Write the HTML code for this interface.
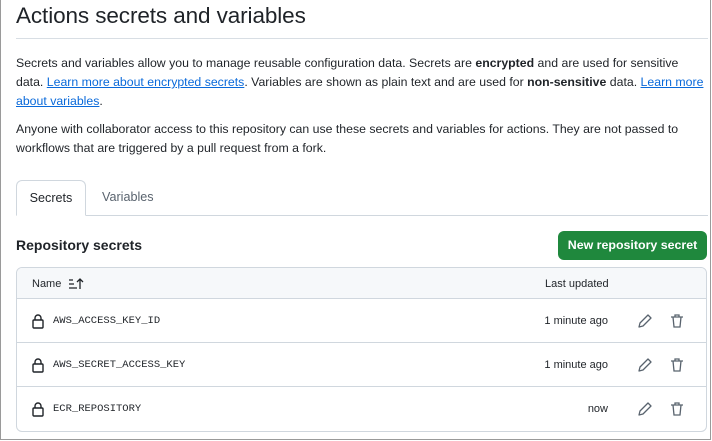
<!DOCTYPE html>
<html><head><meta charset="utf-8"><style>
*{box-sizing:border-box;margin:0;padding:0}
body{width:712px;height:441px;overflow:hidden;background:#fff;font-family:"Liberation Sans",sans-serif;color:#1f2328;position:relative}
.frame{position:absolute;left:0;top:-2px;width:711px;height:442px;border:1px solid #9a9a9a;border-top:none}
h1{position:absolute;left:16px;top:3px;font-size:22.5px;font-weight:400;letter-spacing:-0.1px;white-space:nowrap}
.hr{position:absolute;left:16px;right:4px;top:38px;border-top:1px solid #d8dee4}
.p{position:absolute;left:16px;font-size:12.3px;line-height:19px;white-space:nowrap}
a{color:#0969da;text-decoration:underline}
.tabline{position:absolute;left:16px;right:4px;top:215px;border-top:1px solid #d0d7de}
.tab{position:absolute;left:16px;top:180px;width:70px;height:36px;border:1px solid #d0d7de;border-bottom:1px solid #fff;border-radius:6px 6px 0 0;background:#fff;font-size:12.6px;text-align:center;line-height:34px}
.tab2{position:absolute;left:102px;top:190px;font-size:12.6px;color:#59636e}
h2{position:absolute;left:16px;top:237px;font-size:14px;font-weight:600}
.btn{position:absolute;left:558px;top:231px;width:149px;height:29px;background:#1f883d;border-radius:6px;color:#fff;font-weight:700;font-size:12.4px;text-align:center;line-height:29px}
.tbl{position:absolute;left:16px;top:267px;width:691px;height:165px;border:1px solid #d0d7de;border-radius:6px;overflow:hidden}
.hd{height:31px;background:#f6f8fa;border-bottom:1px solid #d0d7de;position:relative;font-size:11px}
.row{height:44px;border-bottom:1px solid #d0d7de;position:relative;font-size:11px}
.row:last-child{border-bottom:none}
.mono{font-family:"Liberation Mono",monospace;font-size:10.5px;position:absolute;left:36px;top:16px}
.t{position:absolute;right:98px;top:16px;color:#1f2328}
svg{position:absolute}
</style></head><body>
<div class="frame"></div>
<h1>Actions secrets and variables</h1>
<div class="hr"></div>
<div class="p" style="top:54px">Secrets and variables allow you to manage reusable configuration data. Secrets are <b>encrypted</b> and are used for sensitive<br>data. <a>Learn more about encrypted secrets</a>. Variables are shown as plain text and are used for <b>non-sensitive</b> data. <a>Learn more</a><br><a>about variables</a>.</div>
<div class="p" style="top:120px">Anyone with collaborator access to this repository can use these secrets and variables for actions. They are not passed to<br>workflows that are triggered by a pull request from a fork.</div>
<div class="tabline"></div>
<div class="tab">Secrets</div>
<div class="tab2">Variables</div>
<h2>Repository secrets</h2>
<div class="btn">New repository secret</div>
<div class="tbl">
<div class="hd"><span style="position:absolute;left:15px;top:10px">Name</span>
<svg style="left:51px;top:10px" width="16" height="12" viewBox="0 0 16 12"><path d="M1 2h4M1 6h5M1 10h8M12 11V1M9 4l3-3 3 3" stroke="#1f2328" stroke-width="1.3" fill="none"/></svg>
<span style="position:absolute;left:528px;top:10px">Last updated</span></div>
<div class="row"><svg style="left:14px;top:14px" width="14" height="16" viewBox="0 0 14 16"><rect x="2" y="7" width="10" height="8" rx="1" stroke="#1f2328" stroke-width="1.4" fill="none"/><path d="M4 7V5a3 3 0 016 0v2" stroke="#1f2328" stroke-width="1.4" fill="none"/></svg><span class="mono">AWS_ACCESS_KEY_ID</span><span class="t">1 minute ago</span>
<svg style="left:620px;top:14px" width="16" height="16" viewBox="0 0 16 16"><path d="M11 2l3 3-8 8-4 1 1-4z" stroke="#59636e" stroke-width="1.3" fill="none" stroke-linejoin="round"/></svg>
<svg style="left:652px;top:14px" width="16" height="16" viewBox="0 0 16 16"><path d="M2 4h12M6 4V2h4v2M4 4l1 10h6l1-10" stroke="#59636e" stroke-width="1.3" fill="none"/></svg></div>
<div class="row"><svg style="left:14px;top:14px" width="14" height="16" viewBox="0 0 14 16"><rect x="2" y="7" width="10" height="8" rx="1" stroke="#1f2328" stroke-width="1.4" fill="none"/><path d="M4 7V5a3 3 0 016 0v2" stroke="#1f2328" stroke-width="1.4" fill="none"/></svg><span class="mono">AWS_SECRET_ACCESS_KEY</span><span class="t">1 minute ago</span>
<svg style="left:620px;top:14px" width="16" height="16" viewBox="0 0 16 16"><path d="M11 2l3 3-8 8-4 1 1-4z" stroke="#59636e" stroke-width="1.3" fill="none" stroke-linejoin="round"/></svg>
<svg style="left:652px;top:14px" width="16" height="16" viewBox="0 0 16 16"><path d="M2 4h12M6 4V2h4v2M4 4l1 10h6l1-10" stroke="#59636e" stroke-width="1.3" fill="none"/></svg></div>
<div class="row"><svg style="left:14px;top:14px" width="14" height="16" viewBox="0 0 14 16"><rect x="2" y="7" width="10" height="8" rx="1" stroke="#1f2328" stroke-width="1.4" fill="none"/><path d="M4 7V5a3 3 0 016 0v2" stroke="#1f2328" stroke-width="1.4" fill="none"/></svg><span class="mono">ECR_REPOSITORY</span><span class="t">now</span>
<svg style="left:620px;top:14px" width="16" height="16" viewBox="0 0 16 16"><path d="M11 2l3 3-8 8-4 1 1-4z" stroke="#59636e" stroke-width="1.3" fill="none" stroke-linejoin="round"/></svg>
<svg style="left:652px;top:14px" width="16" height="16" viewBox="0 0 16 16"><path d="M2 4h12M6 4V2h4v2M4 4l1 10h6l1-10" stroke="#59636e" stroke-width="1.3" fill="none"/></svg></div>
</div>
</body></html>
